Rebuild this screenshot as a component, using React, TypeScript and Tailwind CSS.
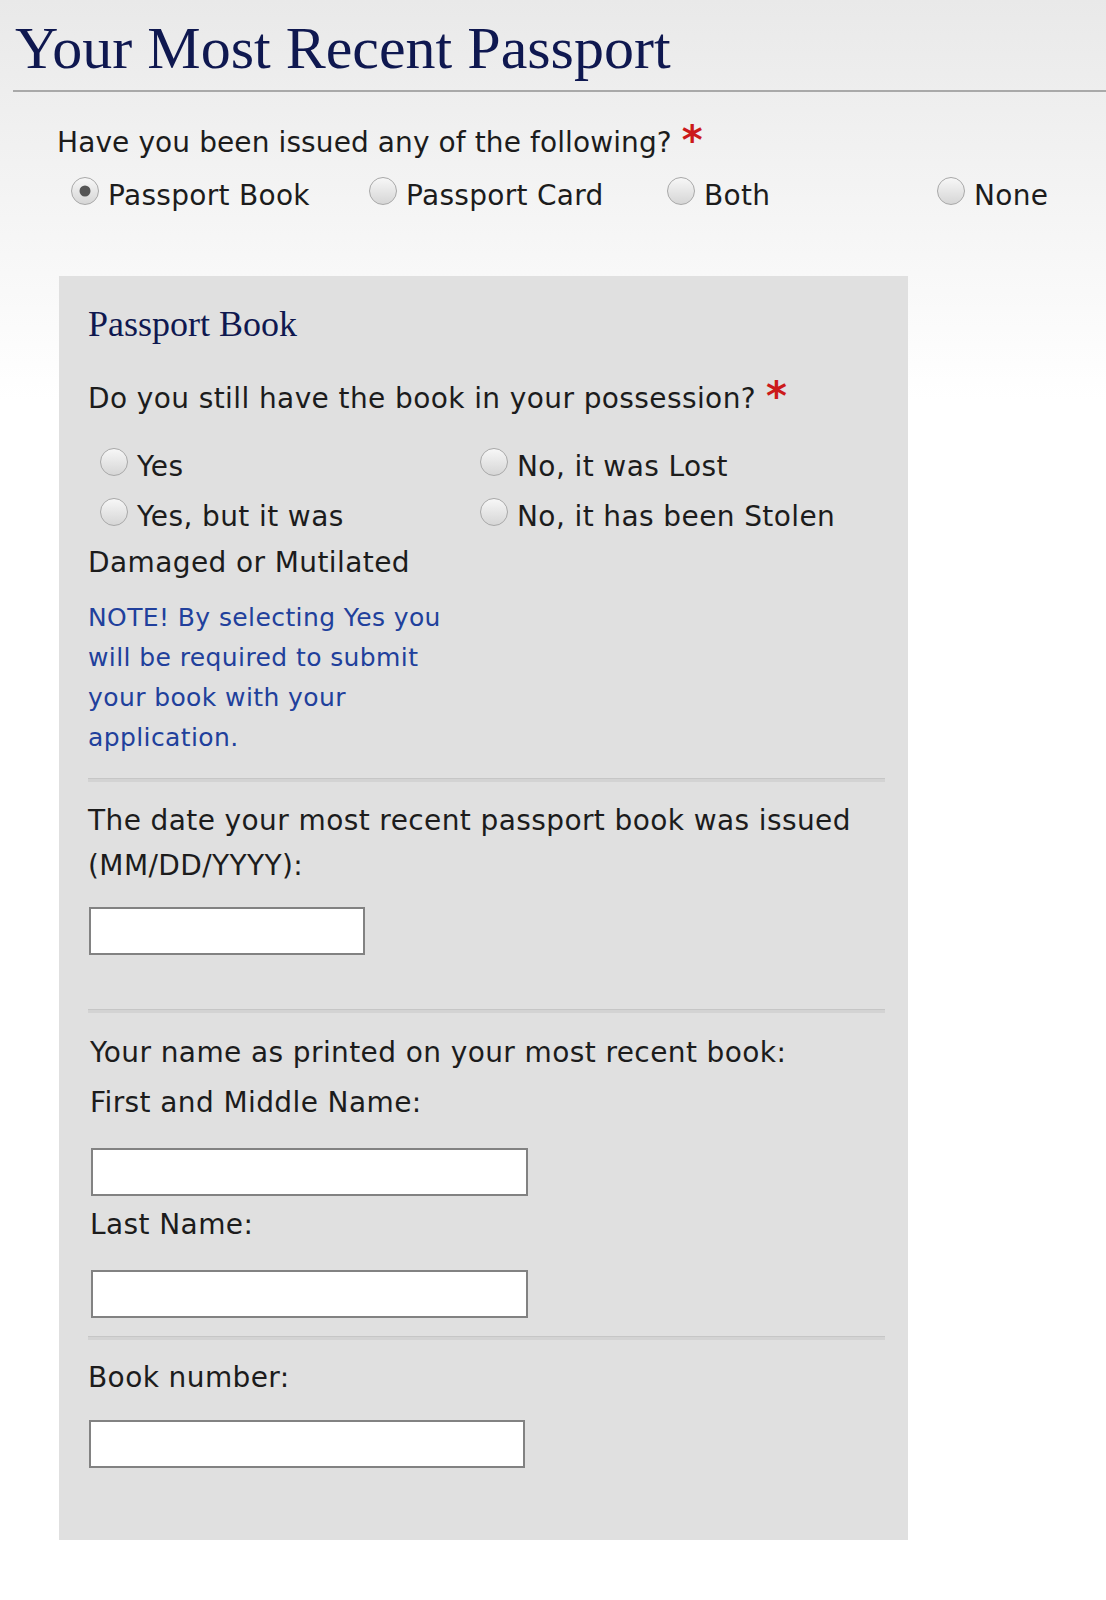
function Radio({ checked }: { checked?: boolean }) {
  return (
    <span className="relative inline-block h-[28px] w-[28px] rounded-full border border-[#a8a8a8] bg-linear-to-b from-[#f7f7f7] to-[#d6d6d6] align-baseline">
      {checked && (
        <span className="absolute left-1/2 top-1/2 h-[11px] w-[11px] -translate-x-1/2 -translate-y-1/2 rounded-full bg-[#555555]" />
      )}
    </span>
  )
}

function Required() {
  return (
    <span className="ml-[10px] inline-block -translate-y-[3px] align-top text-[40px] font-bold leading-[36px] tracking-normal text-[#cc1a1a]">*</span>
  )
}

function Separator() {
  return <div className="h-[4px] border-t border-[#c6c6c6] bg-[#d3d3d3]" />
}

function TextBox({ className }: { className: string }) {
  return <input type="text" className={"block h-[48px] border-2 border-[#828282] bg-white " + className} />
}

export default function App() {
  return (
    <div className="min-h-[1600px] w-full bg-white bg-[linear-gradient(to_bottom,#e9e9e9_0px,#ffffff_400px)] font-['DejaVu_Sans',sans-serif] text-[28px] text-[#1c1c1c]">
      {/* Title */}
      <div className="pl-[13px] pt-[18px]">
        <h1 className="ml-[2px] font-['Liberation_Serif',serif] text-[60px] leading-[60px] text-[#0f1850]">
          Your Most Recent Passport
        </h1>
        <div className="mt-[12px] h-[2px] bg-[#a9a9a9]" />
      </div>

      <div className="pl-[57px]">
        {/* Issued question */}
        <p className="mt-[33px] leading-[36px] tracking-[0.1px]">
          Have you been issued any of the following?
          <Required />
        </p>
        <div className="mt-[16px] flex leading-[36px] tracking-[0.3px]">
          <label className="w-[298px] whitespace-nowrap">
            <span className="ml-[14px] mr-[9px]"><Radio checked /></span>Passport Book
          </label>
          <label className="w-[298px] whitespace-nowrap">
            <span className="ml-[14px] mr-[9px]"><Radio /></span>Passport Card
          </label>
          <label className="w-[270px] whitespace-nowrap">
            <span className="ml-[14px] mr-[9px]"><Radio /></span>Both
          </label>
          <label className="whitespace-nowrap">
            <span className="ml-[14px] mr-[9px]"><Radio /></span>None
          </label>
        </div>

        {/* Passport Book panel */}
        <div className="ml-[2px] mt-[62px] w-[849px] bg-[#e0e0e0] pb-[72px] pl-[29px] pr-[23px] pt-[28px] tracking-[0.4px]">
          <h2 className="font-['Liberation_Serif',serif] text-[36px] leading-[40px] tracking-normal text-[#0f1850]">Passport Book</h2>
          <p className="mt-[37px] leading-[36px]">
            Do you still have the book in your possession?
            <Required />
          </p>

          <div className="mt-[27px] grid grid-cols-[380px_1fr] leading-[46px]">
            <div>
              <label className="block">
                <span className="ml-[12px] mr-[9px]"><Radio /></span>Yes
              </label>
              <label className="mt-[4px] block">
                <span className="ml-[12px] mr-[9px]"><Radio /></span>Yes, but it was Damaged or Mutilated
              </label>
              <p className="mt-[12px] text-[25px] leading-[40px] text-[#21409c]">
                NOTE! By selecting Yes you will be required to submit your book with your application.
              </p>
            </div>
            <div>
              <label className="block whitespace-nowrap">
                <span className="ml-[12px] mr-[9px]"><Radio /></span>No, it was Lost
              </label>
              <label className="mt-[4px] block whitespace-nowrap">
                <span className="ml-[12px] mr-[9px]"><Radio /></span>No, it has been Stolen
              </label>
            </div>
          </div>

          <div className="mt-[20px]">
            <Separator />
          </div>
          <p className="mt-[16px] leading-[45px]">
            The date your most recent passport book was issued (MM/DD/YYYY):
          </p>
          <TextBox className="ml-px mt-[19px] w-[276px]" />

          <div className="mt-[54px]">
            <Separator />
          </div>
          <div className="pl-[2px]">
            <p className="mt-[22px] leading-[36px]">Your name as printed on your most recent book:</p>
            <p className="mt-[14px] leading-[36px]">First and Middle Name:</p>
            <TextBox className="ml-px mt-[27px] w-[437px]" />
            <p className="mt-[11px] leading-[36px]">Last Name:</p>
            <TextBox className="ml-px mt-[27px] w-[437px]" />
          </div>

          <div className="mt-[18px]">
            <Separator />
          </div>
          <p className="mt-[20px] leading-[36px]">Book number:</p>
          <TextBox className="ml-px mt-[24px] w-[436px]" />
        </div>
      </div>
    </div>
  )
}
